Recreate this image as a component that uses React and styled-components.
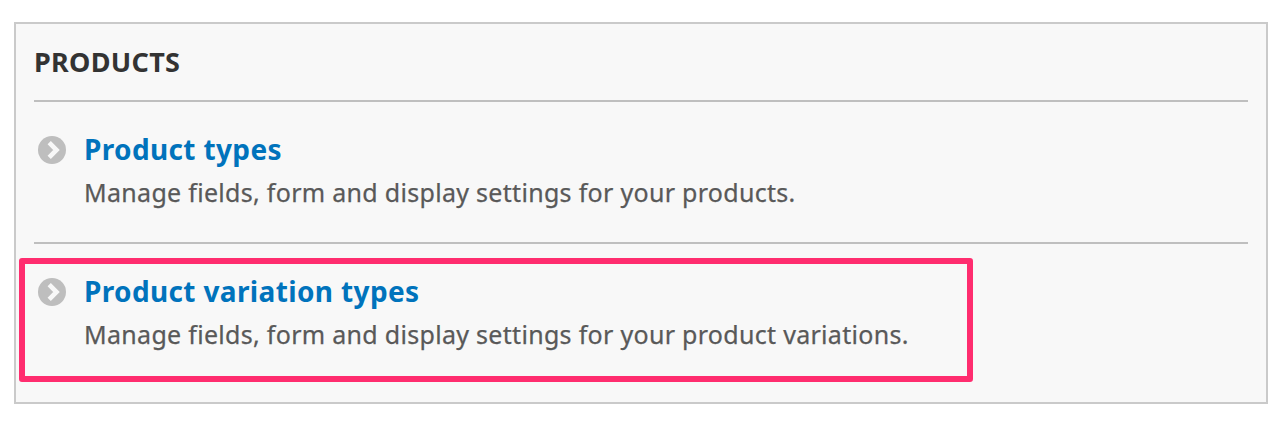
import React from 'react';
import styled, { createGlobalStyle } from 'styled-components';

const GlobalStyle = createGlobalStyle`
  * { box-sizing: border-box; }
  body { margin: 0; background: #fff; font-family: "Noto Sans", "Open Sans", sans-serif; }
`;

const Panel = styled.section`
  position: relative;
  margin: 22px 14px 0 14px;
  width: 1254px;
  height: 382px;
  padding: 0 18px;
  background: #f8f8f8;
  border: 2px solid #cacaca;
`;

const Title = styled.h3`
  margin: 0;
  height: 76px;
  line-height: 76px;
  font-size: 27px;
  font-weight: 700;
  letter-spacing: 0.3px;
  color: #333;
  white-space: nowrap;
`;

const List = styled.ul`
  margin: 0;
  padding: 0;
  list-style: none;
`;

const Item = styled.li`
  display: flex;
  height: 142px;
  border-top: 2px solid #bfbfbf;
  padding: 25px 0 0 4px;
`;

const Bullet = styled.svg`
  flex: none;
  width: 28px;
  height: 28px;
  margin: 9px 18px 0 0;
`;

const Link = styled.a`
  display: block;
  line-height: 44px;
  font-size: 28px;
  font-weight: 700;
  letter-spacing: 0.36px;
  color: #0073bc;
  white-space: nowrap;
`;

const Description = styled.div`
  line-height: 42px;
  font-size: 25px;
  letter-spacing: 0.3px;
  color: #595959;
  -webkit-text-stroke: 0.25px #595959;
  white-space: nowrap;
`;

const Highlight = styled.div`
  position: absolute;
  left: 3px;
  top: 234px;
  width: 954px;
  height: 124px;
  border: 6px solid #ff2d6f;
  border-radius: 3px;
`;

const items = [
  { title: 'Product types', text: 'Manage fields, form and display settings for your products.' },
  { title: 'Product variation types', text: 'Manage fields, form and display settings for your product variations.' },
];

export default function App() {
  return (
    <>
      <GlobalStyle />
      <Panel>
        <Title>PRODUCTS</Title>
        <List>
          {items.map((item) => (
            <Item key={item.title}>
              <Bullet viewBox="0 0 28 28">
                <circle cx="14" cy="14" r="14" fill="#bebebe" />
                <path d="M11.2 6.7L18.5 14l-7.3 7.3" fill="none" stroke="#f8f8f8" strokeWidth="4.6" />
              </Bullet>
              <div>
                <Link>{item.title}</Link>
                <Description>{item.text}</Description>
              </div>
            </Item>
          ))}
        </List>
        <Highlight />
      </Panel>
    </>
  );
}
